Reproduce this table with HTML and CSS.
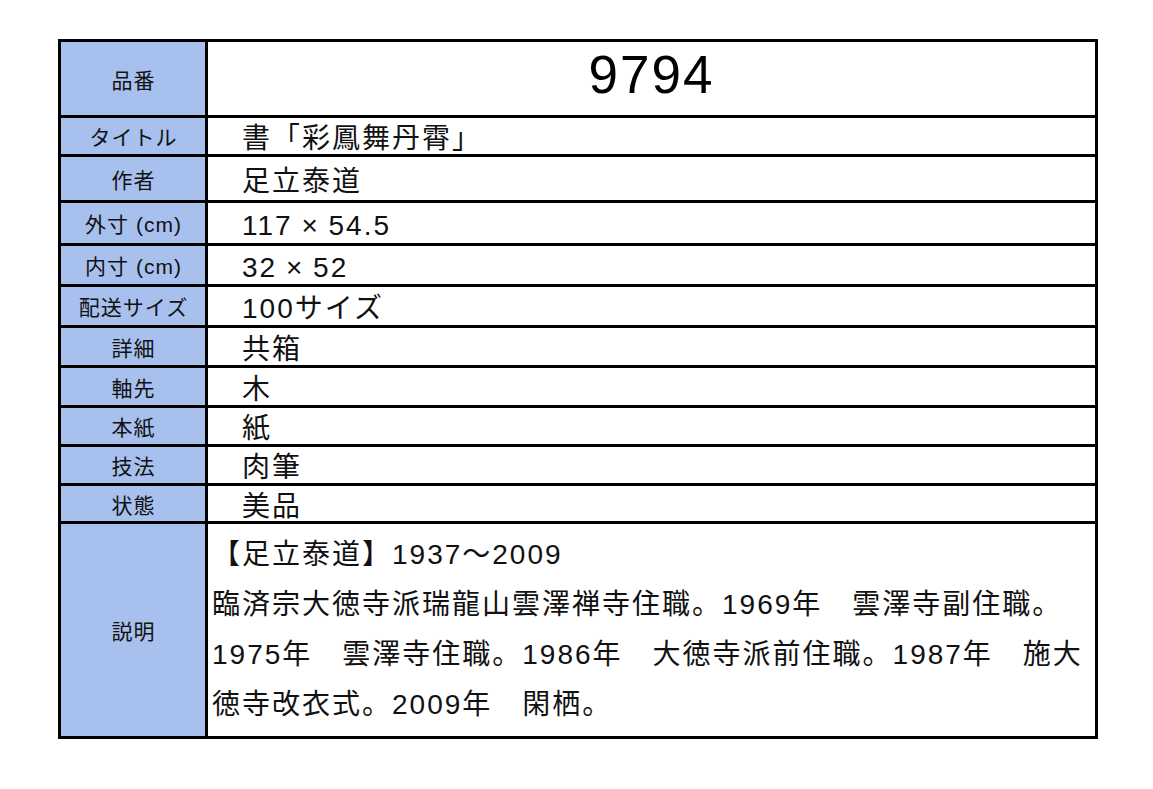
FILE: index.html
```html
<!DOCTYPE html>
<html lang="ja">
<head>
<meta charset="utf-8">
<title>9794</title>
<link rel="stylesheet" href="styles.css">
</head>
<body>
<div class="sheet">
  <div class="label">品番</div>
  <div class="value number">9794</div>
  <div class="label">タイトル</div>
  <div class="value">　書「彩鳳舞丹霄」</div>
  <div class="label">作者</div>
  <div class="value">　足立泰道</div>
  <div class="label">外寸 (cm)</div>
  <div class="value">　117 × 54.5</div>
  <div class="label">内寸 (cm)</div>
  <div class="value">　32 × 52</div>
  <div class="label">配送サイズ</div>
  <div class="value">　100サイズ</div>
  <div class="label">詳細</div>
  <div class="value">　共箱</div>
  <div class="label">軸先</div>
  <div class="value">　木</div>
  <div class="label">本紙</div>
  <div class="value">　紙</div>
  <div class="label">技法</div>
  <div class="value">　肉筆</div>
  <div class="label">状態</div>
  <div class="value">　美品</div>
  <div class="label">説明</div>
  <div class="value desc">
    <p class="desc-text">【足立泰道】1937〜2009<br>臨済宗大徳寺派瑞龍山雲澤禅寺住職。1969年　雲澤寺副住職。<br>1975年　雲澤寺住職。1986年　大徳寺派前住職。1987年　施大<br>徳寺改衣式。2009年　閑栖。</p>
  </div>
</div>
</body>
</html>
```

FILE: styles.css
```css
html, body {
  margin: 0;
  padding: 0;
  background: #ffffff;
}

body {
  font-family: "Liberation Sans", "Noto Sans CJK JP", sans-serif;
  color: #111111;
}

.sheet {
  box-sizing: border-box;
  width: 1040px;
  margin: 39px 0 0 58px;
  display: grid;
  grid-template-columns: 144px 1fr;
  grid-template-rows: 73px 36px 43px 40px 38px 38px 37px 37px 36px 36px 35px 212px;
  gap: 3px;
  background: #000000;
  border: 3px solid #000000;
}

.label {
  background: #a7c0ee;
  display: flex;
  align-items: center;
  justify-content: center;
  font-size: 21px;
  letter-spacing: 1px;
  padding-left: 1px;
  white-space: nowrap;
}

.value {
  background: #ffffff;
  display: flex;
  align-items: center;
  padding: 0 4px;
  font-size: 28px;
  letter-spacing: 2px;
  word-spacing: -1px;
  white-space: nowrap;
}

.number {
  justify-content: center;
  font-size: 53px;
  letter-spacing: 2px;
  word-spacing: 0;
  padding: 0 0 8px 0;
  color: #000000;
}

.desc-text {
  margin: 0;
  line-height: 50px;
  white-space: nowrap;
}
```
